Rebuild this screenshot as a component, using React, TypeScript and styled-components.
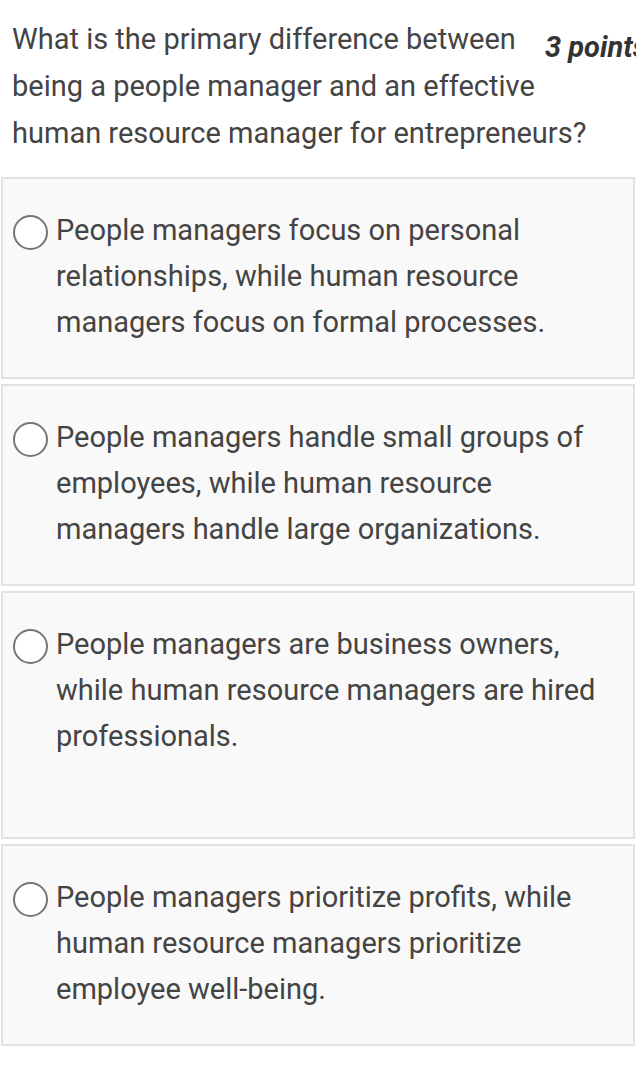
import styled, { createGlobalStyle } from "styled-components";

const GlobalStyle = createGlobalStyle`
	html, body {
		margin: 0;
		padding: 0;
		background: #ffffff;
	}
	body {
		font-family: Roboto, "Liberation Sans", Arial, sans-serif;
		color: #444444;
	}
`;

const Page = styled.div`
	width: 636px;
	overflow: hidden;
`;

const Header = styled.div`
	padding: 16px 36px 0 12px;
	margin-bottom: 20px;
	display: flow-root;
`;

// the points label floats so the question wraps round it
const Points = styled.div`
	float: right;
	width: 91px;
	margin: 17px -36px 0 0;
	white-space: nowrap;
	font-size: 29px;
	line-height: 28px;
	font-weight: 700;
	font-style: italic;
	color: #333333;
`;

const Question = styled.div`
	font-size: 29px;
	line-height: 47px;
	color: #444444;
`;

const Options = styled.div`
	display: flex;
	flex-direction: column;
	gap: 5px;
	padding: 0 1px;
`;

const Card = styled.label<{ $extra?: number }>`
	display: flex;
	align-items: flex-start;
	background: #f9f9f9;
	border: 2px solid #e2e2e2;
	padding: 28px 16px ${(p) => 32 + (p.$extra || 0)}px 10px;
	cursor: pointer;
`;

const Radio = styled.span`
	flex-shrink: 0;
	width: 31px;
	height: 31px;
	margin-top: 8px;
	border: 2px solid #767676;
	border-radius: 50%;
	background: #ffffff;
`;

const OptionText = styled.div`
	margin-left: 8px;
	font-size: 29px;
	line-height: 46px;
	color: #444444;
`;

const options = [
	{ text: "People managers focus on personal relationships, while human resource managers focus on formal processes.", extra: 0 },
	{ text: "People managers handle small groups of employees, while human resource managers handle large organizations.", extra: 0 },
	{ text: "People managers are business owners, while human resource managers are hired professionals.", extra: 46 },
	{ text: "People managers prioritize profits, while human resource managers prioritize employee well-being.", extra: 0 },
];

const App = () => {
	return (
		<Page>
			<GlobalStyle />
			<Header>
				<Points>3 points</Points>
				<Question>
					What is the primary difference between being a people manager and an effective human resource manager for entrepreneurs?
				</Question>
			</Header>
			<Options>
				{options.map((o, i) => (
					<Card key={i} $extra={o.extra}>
						<Radio />
						<OptionText>{o.text}</OptionText>
					</Card>
				))}
			</Options>
		</Page>
	);
};

export default App;
